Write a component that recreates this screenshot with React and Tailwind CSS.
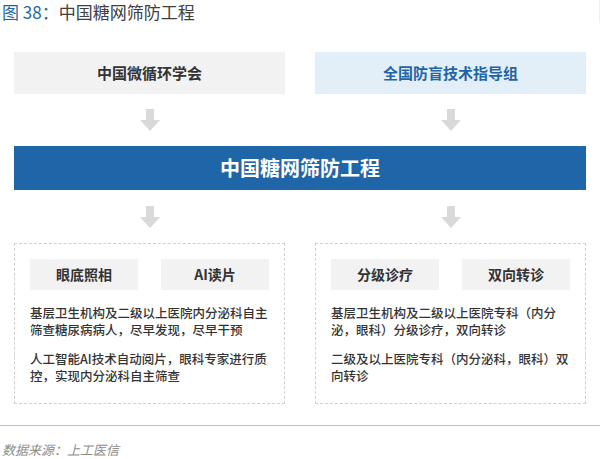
import React from "react";

const Arrow = () => (
  <svg width="20" height="22" viewBox="0 0 20 22">
    <path d="M6 0h8v11h6L10 22 0 11h6z" fill="#d9d9d9" />
  </svg>
);

const Panel = ({ tags, paras }) => (
  <div className="flex-1 h-[161px] border border-dashed border-[#d0d0d0] px-[15px] pt-[15px]">
    <div className="flex justify-between">
      {tags.map((t) => (
        <div key={t} className="w-[108px] h-[31px] bg-[#f2f2f2] flex items-center justify-center text-[14px] font-bold text-[#333]">
          {t}
        </div>
      ))}
    </div>
    {paras.map((p, i) => (
      <p key={i} className="mt-[12px] first-of-type:mt-[14px] text-[12.5px] leading-[17px] font-medium text-[#333]">
        {p}
      </p>
    ))}
  </div>
);

export default function App() {
  return (
    <div className="w-[600px] h-[459px] bg-white relative overflow-hidden" style={{ fontFamily: '"Noto Sans CJK SC", "Noto Sans", sans-serif' }}>
      <div className="h-[23px] flex items-center pl-[2px] text-[17px] leading-none border-r border-[#eee]">
        <span className="text-[#1f65a6]">图 38：</span>
        <span className="text-[#404040]">中国糖网筛防工程</span>
      </div>
      <div className="px-[14px] pt-[29px]">
        <div className="flex gap-[30px]">
          <div className="flex-1 h-[42px] bg-[#f2f2f2] flex items-center justify-center text-[15px] font-bold text-[#333]">中国微循环学会</div>
          <div className="flex-1 h-[42px] bg-[#e3eff8] flex items-center justify-center text-[15px] font-bold text-[#1f65a6]">全国防盲技术指导组</div>
        </div>
        <div className="flex h-[52px] items-center">
          <div className="flex-1 flex justify-center"><Arrow /></div>
          <div className="w-[30px]" />
          <div className="flex-1 flex justify-center"><Arrow /></div>
        </div>
        <div className="h-[44px] bg-[#1f66a8] flex items-center justify-center text-[20px] font-bold text-white">中国糖网筛防工程</div>
        <div className="flex h-[53px] items-center">
          <div className="flex-1 flex justify-center"><Arrow /></div>
          <div className="w-[30px]" />
          <div className="flex-1 flex justify-center"><Arrow /></div>
        </div>
        <div className="flex gap-[30px]">
          <Panel tags={["眼底照相", "AI读片"]} paras={["基层卫生机构及二级以上医院内分泌科自主筛查糖尿病病人，尽早发现，尽早干预", "人工智能AI技术自动阅片，眼科专家进行质控，实现内分泌科自主筛查"]} />
          <Panel tags={["分级诊疗", "双向转诊"]} paras={["基层卫生机构及二级以上医院专科（内分泌，眼科）分级诊疗，双向转诊", "二级及以上医院专科（内分泌科，眼科）双向转诊"]} />
        </div>
      </div>
      <div className="mt-[21px] border-t border-[#bfbfbf]" />
      <div className="pt-[14px] pl-[2px] text-[13px] italic text-[#8c8c8c]">数据来源：上工医信</div>
    </div>
  );
}
